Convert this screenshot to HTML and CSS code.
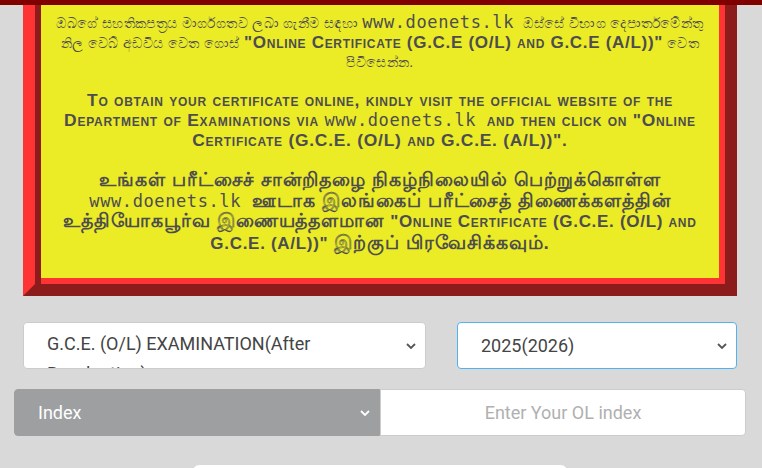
FILE: index.html
```html
<!DOCTYPE html>
<html lang="en">
<head>
    <title>Online Certificate</title>
    <meta charset="UTF-8" />
    <meta name="viewport" content="width=device-width" />
    <link rel="stylesheet" href="styles.css">
</head>
<body>
    <div class="topbar"></div>
    <main>
        <div class="notice">
            <p class="si">ඔබගේ සහතිකපත්‍රය මාර්ගගතව ලබා ගැනීම සඳහා <span class="site">www.doenets.lk</span> ඔස්සේ විභාග දෙපාර්තමේන්තු නිල වෙබ් අඩවිය වෙත ගොස් <span class="latin">"Online Certificate (G.C.E (O/L) and G.C.E (A/L))"</span> වෙත පිවිසෙන්න.</p>
            <p class="en">To obtain your certificate online, kindly visit the official website of the Department of Examinations via <span class="site">www.doenets.lk</span> and then click on "Online Certificate (G.C.E. (O/L) and G.C.E. (A/L))".</p>
            <p class="ta">உங்கள் பரீட்சைச் சான்றிதழை நிகழ்நிலையில் பெற்றுக்கொள்ள <span class="site">www.doenets.lk</span> ஊடாக இலங்கைப் பரீட்சைத் திணைக்களத்தின் உத்தியோகபூர்வ இணையத்தளமான <span class="latin">"Online Certificate (G.C.E. (O/L) and G.C.E. (A/L))"</span> இற்குப் பிரவேசிக்கவும்.</p>
        </div>

        <div class="row exam-row">
            <div class="field">
                <span class="select-text wrap">G.C.E. (O/L) EXAMINATION(After Revaluation)</span>
                <svg class="chev" width="10" height="6" viewBox="0 0 10 6"><path d="M1 1l4 4 4-4" fill="none" stroke="#555" stroke-width="1.8"/></svg>
            </div>
            <div class="field focused">
                <span class="select-text">2025(2026)</span>
                <svg class="chev" width="10" height="6" viewBox="0 0 10 6"><path d="M1 1l4 4 4-4" fill="none" stroke="#555" stroke-width="1.8"/></svg>
            </div>
        </div>

        <div class="row index-row">
            <div class="field grey">
                <span class="select-text">Index</span>
                <svg class="chev" width="10" height="6" viewBox="0 0 10 6"><path d="M1 1l4 4 4-4" fill="none" stroke="#fff" stroke-width="1.8"/></svg>
            </div>
            <div class="field input">
                <span class="placeholder">Enter Your OL index</span>
            </div>
        </div>

        <div class="submit"></div>
    </main>
</body>
</html>
```

FILE: styles.css
```css
body {
    margin: 0;
    background: #d9d9d9;
    font-family: Roboto, "Liberation Sans", sans-serif;
    overflow: hidden;
}
.topbar {
    height: 5px;
    background: #800000;
}
main {
    padding: 0 25px 0 23px;
}
.notice {
    background: #ebeb26;
    border: 12px solid #8c1c1c;
    border-top: 0;
    border-color: #8c1c1c #8c1c1c #8c1c1c #fe3434;
    box-shadow: inset 6px 0 0 #8c1c1c, inset -6px -6px 0 #fe3434;
    padding: 8px 8px 29px;
    text-align: center;
    color: #4d4d4f;
    font-family: "Liberation Sans", Arial, sans-serif;
    font-weight: bold;
    font-variant: small-caps;
    font-size: 17.4px;
    letter-spacing: 0.75px;
    line-height: 20px;
}
.notice p {
    margin: 0;
}
.notice .si {
    font-size: 14px;
    font-weight: normal;
    letter-spacing: 0.4px;
    line-height: 19px;
}
.notice .si .latin {
    font-size: 17px;
    font-weight: bold;
    letter-spacing: 0.7px;
}
.notice .en {
    margin-top: 18px;
}
.notice .ta {
    margin-top: 20px;
    font-size: 19px;
    line-height: 20.7px;
    letter-spacing: 0.9px;
}
.notice .ta .latin {
    font-size: 17px;
    letter-spacing: 0.7px;
}
.site {
    font-family: "DejaVu Sans Mono", "Liberation Mono", monospace;
    font-weight: normal;
    font-variant: normal;
    font-size: 17px;
    letter-spacing: 0.6px;
    padding: 0 5px 0 0;
}
.row {
    display: grid;
    margin-top: 26px;
}
.exam-row {
    grid-template-columns: 403px 280px;
    column-gap: 31px;
}
.index-row {
    margin: 20px -9px 0 -9px;
    grid-template-columns: 1fr 1fr;
}
.field {
    position: relative;
    height: 47px;
    box-sizing: border-box;
    background: #fff;
    border: 1px solid #ccc;
    border-radius: 4px;
    display: flex;
    align-items: center;
    padding: 0 40px 0 23px;
    color: #444;
    font-size: 18px;
    overflow: hidden;
}
.field.focused {
    border-color: #4db4f0;
}
.select-text.wrap {
    align-self: flex-start;
    margin-top: 6px;
    line-height: 30px;
}
.chev {
    position: absolute;
    right: 9px;
    top: 20px;
}
.field.grey {
    background: #9e9fa0;
    border-color: #9e9fa0;
    color: #fff;
    border-radius: 4px 0 0 4px;
}
.field.input {
    border-radius: 0 4px 4px 0;
    justify-content: center;
    padding: 0;
}
.placeholder {
    color: #b0b0b0;
}
.submit {
    margin: 29px auto 0;
    width: 374px;
    height: 40px;
    background: #fff;
    border-radius: 6px;
}
```
